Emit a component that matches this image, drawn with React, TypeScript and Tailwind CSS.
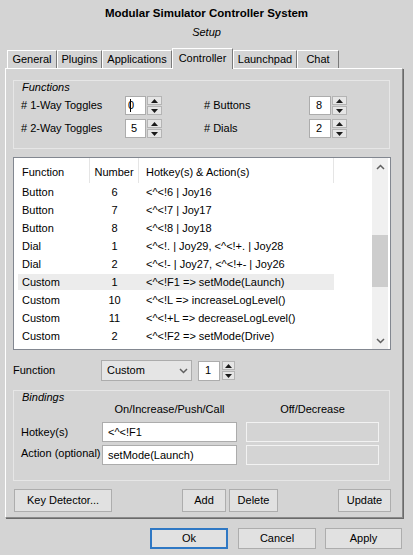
import React from "react";

function Tab({ className, selected, children }: { className: string; selected?: boolean; children: React.ReactNode }) {
  if (selected) {
    return (
      <div
        className={`relative z-10 -mb-px h-[21px] pt-[3px] leading-[13px] text-center bg-[#d4d4d4] border-t border-l border-white border-r border-r-[#7a7a7a] ${className}`}
      >
        {children}
      </div>
    );
  }
  return (
    <div
      className={`h-[18px] pt-[2px] leading-[13px] text-center border-t border-l border-white border-r border-r-[#7a7a7a] ${className}`}
    >
      {children}
    </div>
  );
}

function Tri({ up }: { up?: boolean }) {
  return (
    <svg width="7" height="4" viewBox="0 0 7 4">
      {up ? <path d="M3.5 0 L7 4 L0 4 Z" fill="#1a1a1a" /> : <path d="M0 0 L7 0 L3.5 4 Z" fill="#1a1a1a" />}
    </svg>
  );
}

function UpDown({ className }: { className: string }) {
  return (
    <div className={`flex flex-col gap-px ${className}`}>
      <div className="flex-1 flex items-center justify-center bg-[#e6e6e6] border border-[#b4b4b4]">
        <Tri up />
      </div>
      <div className="flex-1 flex items-center justify-center bg-[#e6e6e6] border border-[#b4b4b4]">
        <Tri />
      </div>
    </div>
  );
}

function Chevron({ up }: { up?: boolean }) {
  return (
    <svg width="9" height="6" viewBox="0 0 9 6">
      {up ? (
        <path d="M1 5 L4.5 1.5 L8 5" fill="none" stroke="#606060" strokeWidth="1.5" />
      ) : (
        <path d="M1 1 L4.5 4.5 L8 1" fill="none" stroke="#606060" strokeWidth="1.5" />
      )}
    </svg>
  );
}

function Btn({ className, children }: { className: string; children: React.ReactNode }) {
  return (
    <div className={`flex items-center justify-center bg-[#e1e1e1] border border-[#adadad] ${className}`}>
      {children}
    </div>
  );
}

const rows = [
  ["Button", "6", "<^<!6 | Joy16"],
  ["Button", "7", "<^<!7 | Joy17"],
  ["Button", "8", "<^<!8 | Joy18"],
  ["Dial", "1", "<^<!. | Joy29, <^<!+. | Joy28"],
  ["Dial", "2", "<^<!- | Joy27, <^<!+- | Joy26"],
  ["Custom", "1", "<^<!F1 => setMode(Launch)"],
  ["Custom", "10", "<^<!L => increaseLogLevel()"],
  ["Custom", "11", "<^<!+L => decreaseLogLevel()"],
  ["Custom", "2", "<^<!F2 => setMode(Drive)"],
];

export default function App() {
  return (
    <div className="w-[413px] h-[555px] overflow-hidden bg-[#d4d4d4] font-['Liberation_Sans',Arial,sans-serif] text-[11px] leading-[13px] text-black select-none">
      <div className="pt-[6px] h-[20px] text-center font-bold text-[11.5px] leading-[14px]">
        Modular Simulator Controller System
      </div>
      <div className="mt-[5px] h-[14px] text-center italic leading-[14px]">Setup</div>

      {/* Tabs */}
      <div className="mt-[9px] h-[20px] pl-[7px] flex items-end">
        <Tab className="w-[50px]">General</Tab>
        <Tab className="w-[45px]">Plugins</Tab>
        <Tab className="w-[70px]">Applications</Tab>
        <Tab className="w-[61px]" selected>
          Controller
        </Tab>
        <Tab className="w-[64px]">Launchpad</Tab>
        <Tab className="w-[42px]">Chat</Tab>
      </div>

      {/* Pane */}
      <div className="ml-[5px] w-[398px] h-[450px] border border-white border-r-[#8a8a8a] border-b-[#8a8a8a] shadow-[1px_1px_0_#6a6a6a] flex flex-col pl-[7px]">
        {/* Functions group */}
        <div className="mt-[11px] w-[377px] h-[69px] border border-[#e6e6e6] flex flex-col">
          <div className="pl-[8px] h-[12px] leading-[12px] italic">Functions</div>
          <div className="mt-[3px] h-[19px] pl-[7px] flex items-center">
            <div className="w-[104px]"># 1-Way Toggles</div>
            <div className="w-[21px] h-[19px] bg-white border border-[#acacac] flex items-center pl-[4px]">
              <span className="border-l border-black h-[13px] -mr-[3px]"></span>
              <span>0</span>
            </div>
            <UpDown className="ml-px w-[15px] h-[19px]" />
            <div className="w-[42px]"></div>
            <div className="w-[105px]"># Buttons</div>
            <div className="w-[22px] h-[19px] bg-white border border-[#acacac] flex items-center pl-[6px]">8</div>
            <UpDown className="ml-px w-[15px] h-[19px]" />
          </div>
          <div className="mt-[4px] h-[19px] pl-[7px] flex items-center">
            <div className="w-[104px]"># 2-Way Toggles</div>
            <div className="w-[21px] h-[19px] bg-white border border-[#acacac] flex items-center pl-[5px]">5</div>
            <UpDown className="ml-px w-[15px] h-[19px]" />
            <div className="w-[42px]"></div>
            <div className="w-[105px]"># Dials</div>
            <div className="w-[22px] h-[19px] bg-white border border-[#acacac] flex items-center pl-[6px]">2</div>
            <UpDown className="ml-px w-[15px] h-[19px]" />
          </div>
        </div>

        {/* List view */}
        <div className="mt-[8px] w-[378px] h-[193px] border border-[#828790] bg-white flex overflow-hidden">
          <div className="w-[358px] flex flex-col overflow-hidden">
            <div className="h-[25px] shrink-0 flex">
              <div className="w-[76px] pl-[8px] pt-[8px] border-r border-[#e5e5e5]">Function</div>
              <div className="w-[49px] pt-[8px] text-center border-r border-[#e5e5e5]">Number</div>
              <div className="w-[195px] pl-[7px] pt-[8px] border-r border-[#e5e5e5]">Hotkey(s) &amp; Action(s)</div>
            </div>
            {rows.map((r, i) => (
              <div key={i} className="h-[18px] shrink-0 py-px">
                <div className={`ml-[4px] w-[316px] h-[16px] flex items-center ${i === 5 ? "bg-[#ececec]" : ""}`}>
                  <div className="w-[72px] pl-[4px]">{r[0]}</div>
                  <div className="w-[49px] text-center">{r[1]}</div>
                  <div className="w-[195px] pl-[7px] whitespace-nowrap">{r[2]}</div>
                </div>
              </div>
            ))}
          </div>
          <div className="w-[16px] bg-[#f0f0f0] flex flex-col">
            <div className="h-[17px] flex items-center justify-center">
              <Chevron up />
            </div>
            <div className="mt-[60px] h-[52px] bg-[#cdcdcd]"></div>
            <div className="flex-1"></div>
            <div className="h-[17px] flex items-center justify-center">
              <Chevron />
            </div>
          </div>
        </div>

        {/* Function row */}
        <div className="mt-[10px] h-[21px] flex items-center">
          <div className="w-[88px]">Function</div>
          <div className="w-[91px] h-[21px] bg-[#e5e5e5] border border-[#acacac] flex items-center pl-[5px] pr-[3px]">
            <span className="flex-1">Custom</span>
            <Chevron />
          </div>
          <div className="ml-[6px] w-[22px] h-[20px] bg-white border border-[#acacac] flex items-center pl-[6px]">1</div>
          <UpDown className="ml-[2px] w-[13px] h-[19px]" />
        </div>

        {/* Bindings group */}
        <div className="mt-[9px] w-[377px] h-[91px] border border-[#e6e6e6] flex flex-col">
          <div className="pl-[8px] h-[12px] leading-[12px] italic">Bindings</div>
          <div className="h-[12px] leading-[12px] flex pl-[88px]">
            <div className="w-[135px] text-center">On/Increase/Push/Call</div>
            <div className="ml-[9px] w-[133px] text-center">Off/Decrease</div>
          </div>
          <div className="mt-[7px] h-[20px] pl-[7px] flex items-center">
            <div className="w-[81px] pt-[1px]">Hotkey(s)</div>
            <div className="w-[135px] h-[20px] bg-white border border-[#acacac] flex items-center pl-[5px]">&lt;^&lt;!F1</div>
            <div className="ml-[9px] w-[133px] h-[20px] border border-[#f2f2f2]"></div>
          </div>
          <div className="mt-[3px] h-[20px] pl-[7px] flex items-center">
            <div className="w-[81px] -mt-[4px] whitespace-nowrap">Action (optional)</div>
            <div className="w-[135px] h-[20px] bg-white border border-[#acacac] flex items-center pl-[5px]">setMode(Launch)</div>
            <div className="ml-[9px] w-[133px] h-[20px] border border-[#f2f2f2]"></div>
          </div>
        </div>

        {/* Buttons row */}
        <div className="mt-[8px] h-[23px] flex">
          <Btn className="ml-px w-[98px]">Key Detector...</Btn>
          <Btn className="ml-[70px] w-[44px]">Add</Btn>
          <Btn className="ml-[3px] w-[49px]">Delete</Btn>
          <Btn className="ml-[60px] w-[53px]">Update</Btn>
        </div>
      </div>

      {/* Bottom buttons */}
      <div className="mt-[10px] h-[21px] flex">
        <div className="ml-[150px] w-[78px] h-[21px] flex items-center justify-center bg-[#e1e1e1] border-2 border-[#2f78c4]">Ok</div>
        <Btn className="ml-[10px] w-[78px]">Cancel</Btn>
        <Btn className="ml-[9px] w-[77px]">Apply</Btn>
      </div>
    </div>
  );
}
